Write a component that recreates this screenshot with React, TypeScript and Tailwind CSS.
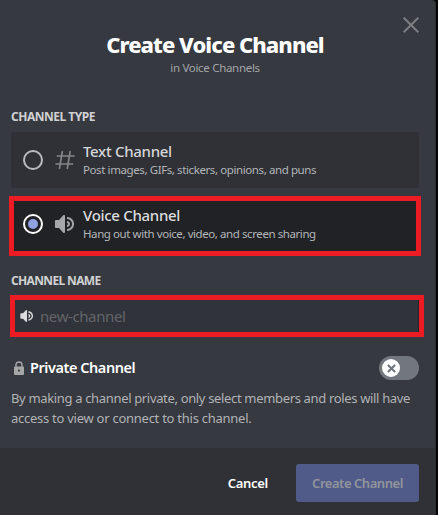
import React from "react";

function Speaker({ className }: { className: string }) {
  return (
    <svg viewBox="0 0 24 24" className={className} fill="currentColor">
      <path d="M11.383 3.07904C11.009 2.92504 10.579 3.01004 10.293 3.29604L6 8.00204H3C2.45 8.00204 2 8.45304 2 9.00204V15.002C2 15.552 2.45 16.002 3 16.002H6L10.293 20.71C10.579 20.996 11.009 21.082 11.383 20.927C11.757 20.772 12 20.407 12 20.002V4.00204C12 3.59904 11.757 3.23204 11.383 3.07904ZM14 5.00195V7.00195C16.757 7.00195 19 9.24595 19 12.002C19 14.759 16.757 17.002 14 17.002V19.002C17.86 19.002 21 15.863 21 12.002C21 8.14295 17.86 5.00195 14 5.00195ZM14 9.00195C15.654 9.00195 17 10.349 17 12.002C17 13.657 15.654 15.002 14 15.002V13.002C14.551 13.002 15 12.553 15 12.002C15 11.451 14.551 11.002 14 11.002V9.00195Z" />
    </svg>
  );
}

function Hash({ className }: { className: string }) {
  return (
    <svg viewBox="0 0 20 20" className={className} fill="none" stroke="currentColor" strokeWidth="1.6">
      <path d="M7.4 1 L4.4 19 M15.2 1 L12.2 19 M1.8 6 H19.6 M.4 14 H18.2" />
    </svg>
  );
}

export default function App() {
  return (
    <div className="flex h-[515px] w-[438px] overflow-hidden bg-[#050506] font-['Noto_Sans','Open_Sans',sans-serif] whitespace-nowrap">
      <div className="flex w-[436px] flex-col rounded-tr-[4px] border-r border-[#2b2d32] bg-[#36393f]">
        <header className="relative flex h-[109px] flex-col items-center pr-[5px] pt-[30px]">
          <h1 className="text-[22px] leading-[28px] font-extrabold tracking-[-0.95px] text-white">Create Voice Channel</h1>
          <p className="mt-[2px] text-[11.5px] leading-[16px] tracking-[-0.3px] text-[#a3a6aa]">in Voice Channels</p>
          <button aria-label="Close" className="absolute top-[17px] left-[403px] text-[#7c7e81]">
            <svg viewBox="0 0 16 16" className="size-4" fill="none" stroke="currentColor" strokeWidth="2">
              <path d="M.7 .7 L15.3 15.3 M15.3 .7 L.7 15.3" />
            </svg>
          </button>
        </header>

        <main className="flex h-[339px] flex-col pl-[11px]">
          <h2 className="h-[23px] text-[12px] leading-[16px] font-bold tracking-[-0.5px] text-[#d0d1d3]">CHANNEL TYPE</h2>
          <div className="flex h-14 w-[408px] items-center rounded-[3px] bg-[#2f3136] pl-3">
            <span className="size-5 rounded-full border-2 border-[#b9bbbe]" />
            <Hash className="ml-[12px] size-5 text-[#85878b]" />
            <div className="ml-2 pb-px">
              <div className="text-[15px] leading-[19px] font-medium tracking-[-0.3px] text-[#d5d6d8]">Text Channel</div>
              <div className="text-[11.5px] leading-[17px] tracking-[-0.4px] text-[#b4b6b9]">Post images, GIFs, stickers, opinions, and puns</div>
            </div>
          </div>
          <div className="mt-2 -ml-[2px] flex h-[60px] w-[412px] items-center border-[5px] border-[#ed1c24] bg-[#202225] pb-1 pl-[9px]">
            <span className="flex size-5 items-center justify-center rounded-full border-2 border-white">
              <span className="size-[10px] rounded-full bg-[#8ea1e1]" />
            </span>
            <Speaker className="ml-[10px] size-6 text-[#a6a7a9]" />
            <div className="ml-[6px] pb-px">
              <div className="text-[15px] leading-[19px] font-medium tracking-[-0.3px] text-[#dcddde]">Voice Channel</div>
              <div className="text-[11.5px] leading-[17px] tracking-[-0.42px] text-[#b4b6b9]">Hang out with voice, video, and screen sharing</div>
            </div>
          </div>

          <h2 className="mt-[17px] h-[22px] text-[12px] leading-[16px] font-bold tracking-[-0.65px] text-[#d0d1d3]">CHANNEL NAME</h2>
          <label className="-ml-px flex h-[42px] w-[414px] items-center border-[5px] border-[#ed1c24] bg-[#303339] pl-1">
            <Speaker className="size-4 text-[#dcddde]" />
            <span className="ml-[5px] text-[15px] leading-[20px] tracking-[-0.4px] text-[#63656a]">new-channel</span>
            <span className="ml-auto h-full w-px bg-[#24262a]" />
          </label>

          <div className="mt-[19px] flex h-6 w-[408px] items-center">
            <svg viewBox="0 0 10 14" className="ml-[3px] h-[14px] w-[10px] text-[#a4a6a8]">
              <path d="M2 6 V3.7 C2 0 8 0 8 3.7 V6" fill="none" stroke="currentColor" strokeWidth="1.4" />
              <path fill="currentColor" fillRule="evenodd" d="M1 5.5 H9 Q10 5.5 10 6.5 V13 Q10 14 9 14 H1 Q0 14 0 13 V6.5 Q0 5.5 1 5.5Z M5 8.5 A1.1 1.1 0 1 0 5 10.7 A1.1 1.1 0 1 0 5 8.5Z" />
            </svg>
            <span className="ml-[6px] pb-[2px] text-[14.5px] leading-[20px] font-semibold tracking-[-0.45px] text-white">Private Channel</span>
            <span className="ml-auto flex h-6 w-10 items-center rounded-full bg-[#72767d] pl-[3px]">
              <span className="flex size-[18px] items-center justify-center rounded-full bg-white">
                <svg viewBox="0 0 10 10" className="size-[9px]" fill="none" stroke="#72767d" strokeWidth="2.3">
                  <path d="M1 1 L9 9 M9 1 L1 9" />
                </svg>
              </span>
            </span>
          </div>
          <p className="mt-2 text-[13px] leading-[20px] tracking-[-0.34px] text-[#b1b3b6]">
            By making a channel private, only select members and roles will have
            <br />
            <span className="tracking-[-0.26px]">access to view or connect to this channel.</span>
          </p>
        </main>

        <footer className="flex h-[67px] items-start justify-end bg-[#2f3136] pt-4 pr-[16px]">
          <button className="mr-7 h-[38px] pt-px text-[13px] font-semibold tracking-[-0.3px] text-white">Cancel</button>
          <button className="h-[38px] w-[123px] rounded-[3px] bg-[#505b89] pt-px text-[13px] font-semibold tracking-[-0.45px] text-[#92959c]">
            Create Channel
          </button>
        </footer>
      </div>
    </div>
  );
}
